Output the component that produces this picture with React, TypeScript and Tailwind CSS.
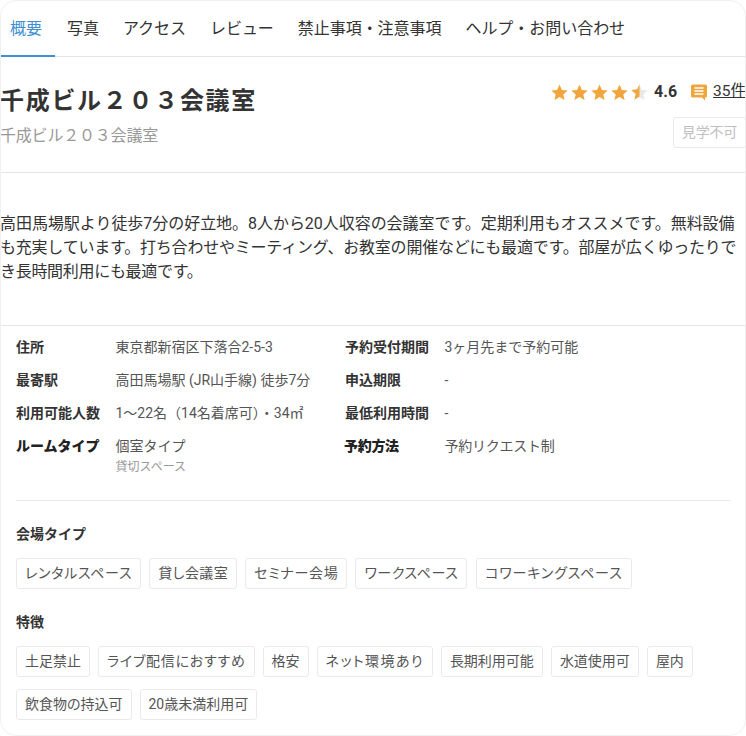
import React from "react";

const font = { fontFamily: '"Roboto", "Noto Sans CJK JP", sans-serif' };

function Star({ half }: { half?: boolean }) {
  const d = "M8.500 .5l2.400 5.400 5.800.6-4.400 3.900 1.300 5.700-5.100-3-5.100 3 1.300-5.700-4.400-3.900 5.800-.6z";
  return (
    <svg width="17" height="16" viewBox="0 0 17 16" className="shrink-0">
      <path d={d} fill={half ? "#e8e8e8" : "#f0a63c"} />
      {half && <path d="M8.500 .5v12l-5.100 3 1.300-5.700-4.400-3.900 5.800-.6z" fill="#f0a63c" />}
    </svg>
  );
}

function Row({ label, value, sub, heavy, shift, valueCls = "" }: { label: string; value: string; sub?: string; heavy?: boolean; shift?: boolean; valueCls?: string }) {
  return (
    <div className={shift ? "flex items-start -ml-[1px]" : "flex items-start"}>
      <div className={(shift ? "w-[100.500px] tracking-[-0.3px] " : "w-[99.500px] ") + (heavy ? "font-black text-[#222] " : "font-bold text-[#333] ") + "shrink-0 text-[14px] leading-[21px]"}>{label}</div>
      <div>
        <div className={"text-[14px] leading-[21px] text-[#555] " + valueCls}>{value}</div>
        {sub && <div className="text-[12px] leading-[18px] mt-[1px] text-[#999]">{sub}</div>}
      </div>
    </div>
  );
}

function Tag({ children, cls }: { children: string; cls: string }) {
  return (
    <span className={"h-[31px] px-[8px] flex items-center border border-[#eaeaea] rounded-[3px] text-[14px] text-[#555] [font-feature-settings:'palt'] whitespace-nowrap " + cls}>
      {children}
    </span>
  );
}

const types = [
  { t: "レンタルスペース", c: "tracking-[0.05em]" },
  { t: "貸し会議室", c: "tracking-[0.03em]" },
  { t: "セミナー会場", c: "tracking-[0.05em]" },
  { t: "ワークスペース", c: "tracking-[0.04em]" },
  { t: "コワーキングスペース", c: "tracking-[0.06em] ml-[1px]" },
];

const features = [
  { t: "土足禁止", c: "tracking-normal" },
  { t: "ライブ配信におすすめ", c: "tracking-[0.055em]" },
  { t: "格安", c: "tracking-normal" },
  { t: "ネット環境あり", c: "tracking-[0.1em]" },
  { t: "長期利用可能", c: "tracking-normal" },
  { t: "水道使用可", c: "tracking-normal" },
  { t: "屋内", c: "tracking-normal" },
  { t: "飲食物の持込可", c: "tracking-normal" },
  { t: "20歳未満利用可", c: "tracking-normal" },
];

export default function App() {
  const tabs = ["写真", "アクセス", "レビュー", "禁止事項・注意事項", "ヘルプ・お問い合わせ"];
  return (
    <div style={font} className="w-[746px] h-[736px] bg-white overflow-hidden">
      <div className="h-[736px] border border-[#f0f0f0] rounded-[16px] overflow-hidden">
        <nav className="flex h-[56px] border-b border-[#e5e5e5] text-[16px] text-[#333] tracking-[-0.04px]">
          <a className="h-[56px] pl-[9px] pr-[12px] w-[54px] flex items-center text-[#3d8fd1] border-b-[2px] border-[#3d8fd1] pt-[2px] whitespace-nowrap">概要</a>
          {tabs.map((t) => (
            <a key={t} className="h-[55px] px-[12px] flex items-center pt-[1px] whitespace-nowrap">{t}</a>
          ))}
        </nav>

        <header className="h-[116px] flex justify-between border-b border-[#e5e5e5] -ml-[1px]">
          <div>
            <h1 className="mt-[26px] text-[24px] leading-[36px] font-bold tracking-[1.700px] text-[#333]">千成ビル２０３会議室</h1>
            <p className="mt-[5px] text-[16px] leading-[24px] text-[#999] tracking-[-0.2px]">千成ビル２０３会議室</p>
          </div>
          <div className="flex flex-col items-end pt-[24px] -mr-[1px]">
            <div className="flex items-center h-[22px]">
              <div className="flex gap-[3px]">
                <Star /><Star /><Star /><Star /><Star half />
              </div>
              <span className="ml-[6px] text-[16px] font-bold text-[#333]">4.6</span>
              <svg width="18" height="18" viewBox="0 0 18 18" className="ml-[13px]">
                <path d="M2.500 1.500h13a1.500 1.500 0 0 1 1.500 1.500v10a1.500 1.500 0 0 1-1.500 1.500H15v3l-3-3H2.500A1.500 1.500 0 0 1 1 13V3a1.500 1.500 0 0 1 1.500-1.500z" fill="#f0a63c" />
                <path d="M4.500 5h9M4.500 8h9M4.500 11h9" stroke="#fff" strokeWidth="1.300" />
              </svg>
              <span className="ml-[5px] text-[15.500px] text-[#333] underline whitespace-nowrap">35件</span>
            </div>
            <span className="mt-[14px] h-[31px] w-[73px] flex items-center justify-center border border-[#eaeaea] rounded-[3px] text-[14px] text-[#c0c0c0] tracking-[-0.01em]">見学不可</span>
          </div>
        </header>

        <p className="h-[153px] pt-[39px] -ml-[1px] border-b border-[#e5e5e5] text-[16px] leading-[24px] text-[#333] whitespace-nowrap">
          <span className="block tracking-[-0.04px]">高田馬場駅より徒歩7分の好立地。8人から20人収容の会議室です。定期利用もオススメです。無料設備</span>
          <span className="block tracking-[-0.21px]">も充実しています。打ち合わせやミーティング、お教室の開催などにも最適です。部屋が広くゆったりで</span>
          <span className="block tracking-[-0.3px]">き長時間利用にも最適です。</span>
        </p>

        <section className="px-[15px] pt-[11px]">
          <div className="grid grid-cols-[329px_1fr] gap-y-[12px] pb-[24px] border-b border-[#e8e8e8]">
            <Row label="住所" value="東京都新宿区下落合2-5-3" />
            <Row label="予約受付期間" value="3ヶ月先まで予約可能" />
            <Row label="最寄駅" value="高田馬場駅 (JR山手線) 徒歩7分" />
            <Row label="申込期限" value="-" />
            <Row label="利用可能人数" value="1〜22名（14名着席可）・34㎡" />
            <Row label="最低利用時間" value="-" />
            <Row label="ルームタイプ" value="個室タイプ" sub="貸切スペース" heavy />
            <Row label="予約方法" value="予約リクエスト制" shift heavy valueCls="tracking-[-0.25px]" />
          </div>

          <h2 className="mt-[23px] text-[14px] leading-[21px] font-bold text-[#333]">会場タイプ</h2>
          <div className="mt-[13px] flex flex-wrap gap-[8px]">
            {types.map((x) => (
              <Tag key={x.t} cls={x.c}>{x.t}</Tag>
            ))}
          </div>

          <h2 className="mt-[23px] text-[14px] leading-[21px] font-bold text-[#333]">特徴</h2>
          <div className="mt-[13px] flex flex-wrap gap-x-[8px] gap-y-[12px]">
            {features.map((x) => (
              <Tag key={x.t} cls={x.c}>{x.t}</Tag>
            ))}
          </div>
        </section>
      </div>
    </div>
  );
}
